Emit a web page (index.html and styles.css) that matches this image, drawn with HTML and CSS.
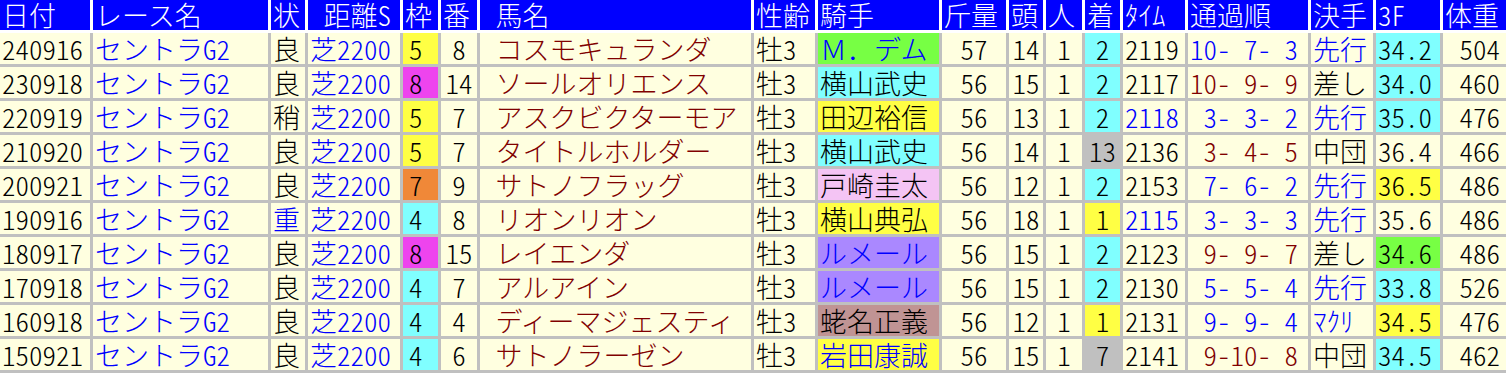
FILE: index.html
```html
<!DOCTYPE html>
<html lang="ja">
<head>
<meta charset="utf-8">
<title>セントラルスターズ過去10年</title>
<link rel="stylesheet" href="styles.css">
</head>
<body>
<div class="sheet">
  <div class="row head">
    <div class="cell">日付</div><div class="cell">レース名</div><div class="cell">状</div><div class="cell"> 距離S</div><div class="cell">枠</div><div class="cell">番</div><div class="cell"> 馬名</div><div class="cell">性齢</div><div class="cell">騎手</div><div class="cell">斤量</div><div class="cell">頭</div><div class="cell">人</div><div class="cell">着</div><div class="cell">ﾀｲﾑ</div><div class="cell">通過順</div><div class="cell">決手</div><div class="cell">3F</div><div class="cell">体重</div>
  </div>

  <div class="row">
    <div class="cell">240916</div><div class="cell t-blue">セントラG2</div><div class="cell">良</div><div class="cell t-blue">芝2200</div><div class="cell waku bg-y">5</div><div class="cell c">8</div><div class="cell t-red"> コスモキュランダ</div><div class="cell">牡3</div><div class="cell fw bg-g t-blue">Ｍ．デム</div><div class="cell c">57</div><div class="cell c">14</div><div class="cell c">1</div><div class="cell c bg-c">2</div><div class="cell">2119</div><div class="cell t-blue">10- 7- 3</div><div class="cell t-blue">先行</div><div class="cell bg-c">34.2</div><div class="cell r">504</div>
  </div>

  <div class="row">
    <div class="cell">230918</div><div class="cell t-blue">セントラG2</div><div class="cell">良</div><div class="cell t-blue">芝2200</div><div class="cell waku bg-m">8</div><div class="cell c">14</div><div class="cell t-red"> ソールオリエンス</div><div class="cell">牡3</div><div class="cell bg-c">横山武史</div><div class="cell c">56</div><div class="cell c">15</div><div class="cell c">1</div><div class="cell c bg-c">2</div><div class="cell">2117</div><div class="cell t-red">10- 9- 9</div><div class="cell">差し</div><div class="cell bg-c">34.0</div><div class="cell r">460</div>
  </div>

  <div class="row">
    <div class="cell">220919</div><div class="cell t-blue">セントラG2</div><div class="cell">稍</div><div class="cell t-blue">芝2200</div><div class="cell waku bg-y">5</div><div class="cell c">7</div><div class="cell t-red"> アスクビクターモア</div><div class="cell">牡3</div><div class="cell bg-y">田辺裕信</div><div class="cell c">56</div><div class="cell c">13</div><div class="cell c">1</div><div class="cell c bg-c">2</div><div class="cell t-blue">2118</div><div class="cell t-blue"> 3- 3- 2</div><div class="cell t-blue">先行</div><div class="cell bg-c">35.0</div><div class="cell r">476</div>
  </div>

  <div class="row">
    <div class="cell">210920</div><div class="cell t-blue">セントラG2</div><div class="cell">良</div><div class="cell t-blue">芝2200</div><div class="cell waku bg-y">5</div><div class="cell c">7</div><div class="cell t-red"> タイトルホルダー</div><div class="cell">牡3</div><div class="cell bg-c">横山武史</div><div class="cell c">56</div><div class="cell c">14</div><div class="cell c">1</div><div class="cell c bg-gr">13</div><div class="cell">2136</div><div class="cell t-red"> 3- 4- 5</div><div class="cell">中団</div><div class="cell">36.4</div><div class="cell r">466</div>
  </div>

  <div class="row">
    <div class="cell">200921</div><div class="cell t-blue">セントラG2</div><div class="cell">良</div><div class="cell t-blue">芝2200</div><div class="cell waku bg-o">7</div><div class="cell c">9</div><div class="cell t-red"> サトノフラッグ</div><div class="cell">牡3</div><div class="cell bg-p">戸崎圭太</div><div class="cell c">56</div><div class="cell c">12</div><div class="cell c">1</div><div class="cell c bg-c">2</div><div class="cell">2153</div><div class="cell t-blue"> 7- 6- 2</div><div class="cell t-blue">先行</div><div class="cell bg-y">36.5</div><div class="cell r">486</div>
  </div>

  <div class="row">
    <div class="cell">190916</div><div class="cell t-blue">セントラG2</div><div class="cell t-blue">重</div><div class="cell t-blue">芝2200</div><div class="cell waku bg-c">4</div><div class="cell c">8</div><div class="cell t-red"> リオンリオン</div><div class="cell">牡3</div><div class="cell bg-y">横山典弘</div><div class="cell c">56</div><div class="cell c">18</div><div class="cell c">1</div><div class="cell c bg-y">1</div><div class="cell t-blue">2115</div><div class="cell t-blue"> 3- 3- 3</div><div class="cell t-blue">先行</div><div class="cell">35.6</div><div class="cell r">486</div>
  </div>

  <div class="row">
    <div class="cell">180917</div><div class="cell t-blue">セントラG2</div><div class="cell">良</div><div class="cell t-blue">芝2200</div><div class="cell waku bg-m">8</div><div class="cell c">15</div><div class="cell t-red"> レイエンダ</div><div class="cell">牡3</div><div class="cell bg-v t-blue">ルメール</div><div class="cell c">56</div><div class="cell c">15</div><div class="cell c">1</div><div class="cell c bg-c">2</div><div class="cell">2123</div><div class="cell t-red"> 9- 9- 7</div><div class="cell">差し</div><div class="cell bg-g">34.6</div><div class="cell r">486</div>
  </div>

  <div class="row">
    <div class="cell">170918</div><div class="cell t-blue">セントラG2</div><div class="cell">良</div><div class="cell t-blue">芝2200</div><div class="cell waku bg-c">4</div><div class="cell c">7</div><div class="cell t-red"> アルアイン</div><div class="cell">牡3</div><div class="cell bg-v t-blue">ルメール</div><div class="cell c">56</div><div class="cell c">15</div><div class="cell c">1</div><div class="cell c bg-c">2</div><div class="cell">2130</div><div class="cell t-blue"> 5- 5- 4</div><div class="cell t-blue">先行</div><div class="cell bg-c">33.8</div><div class="cell r">526</div>
  </div>

  <div class="row">
    <div class="cell">160918</div><div class="cell t-blue">セントラG2</div><div class="cell">良</div><div class="cell t-blue">芝2200</div><div class="cell waku bg-c">4</div><div class="cell c">4</div><div class="cell t-red"> ディーマジェスティ</div><div class="cell">牡3</div><div class="cell bg-r">蛯名正義</div><div class="cell c">56</div><div class="cell c">12</div><div class="cell c">1</div><div class="cell c bg-y">1</div><div class="cell">2131</div><div class="cell t-blue"> 9- 9- 4</div><div class="cell t-blue">ﾏｸﾘ</div><div class="cell bg-y">34.5</div><div class="cell r">476</div>
  </div>

  <div class="row">
    <div class="cell">150921</div><div class="cell t-blue">セントラG2</div><div class="cell">良</div><div class="cell t-blue">芝2200</div><div class="cell waku bg-c">4</div><div class="cell c">6</div><div class="cell t-red"> サトノラーゼン</div><div class="cell">牡3</div><div class="cell bg-y t-blue">岩田康誠</div><div class="cell c">56</div><div class="cell c">15</div><div class="cell c">1</div><div class="cell c bg-gr">7</div><div class="cell">2141</div><div class="cell t-red"> 9-10- 8</div><div class="cell">中団</div><div class="cell bg-c">34.5</div><div class="cell r">462</div>
  </div>
</div>
</body>
</html>
```

FILE: styles.css
```css
html, body {
  margin: 0;
  padding: 0;
  background: #ffffe0;
  overflow: hidden;
}

.sheet {
  width: 1506px;
  font-family: "Noto Sans CJK JP", "Noto Sans", sans-serif;
  font-size: 27px;
  font-weight: 300;
  font-feature-settings: "hwid" 1;
  color: #000000;
}

.row {
  display: grid;
  grid-template-columns: 93px 178px 37px 95px 38px 39px 274px 64px 124px 67px 37px 39px 38px 65px 123px 65px 67px 63px;
  height: 34px;
}

.cell {
  box-sizing: border-box;
  border-right: 3px solid #c0c0c0;
  border-bottom: 3px solid #c0c0c0;
  background: #ffffe0;
  padding: 0 0 0 2px;
  line-height: 31px;
  white-space: pre;
  overflow: hidden;
}

.cell:last-child {
  border-right: none;
}

.head {
  height: 33px;
}

.head .cell {
  background: #0000ff;
  color: #ffffff;
  border-right-color: #ffffff;
  border-bottom-color: #ffffff;
  line-height: 30px;
}

.c { text-align: center; padding-left: 0; }
.r { text-align: right; padding-right: 6px; }
.waku { padding-left: 6px; }
.fw { font-feature-settings: normal; letter-spacing: 0; }

.t-blue { color: #0000ff; }
.t-red { color: #800000; }

.bg-y { background: #ffff44; }
.bg-m { background: #ee44ee; }
.bg-o { background: #f08838; }
.bg-c { background: #80ffff; }
.bg-g { background: #77ff44; }
.bg-p { background: #f4c4f4; }
.bg-v { background: #aa88ff; }
.bg-r { background: #c09494; }
.bg-gr { background: #c0c0c0; }
```
